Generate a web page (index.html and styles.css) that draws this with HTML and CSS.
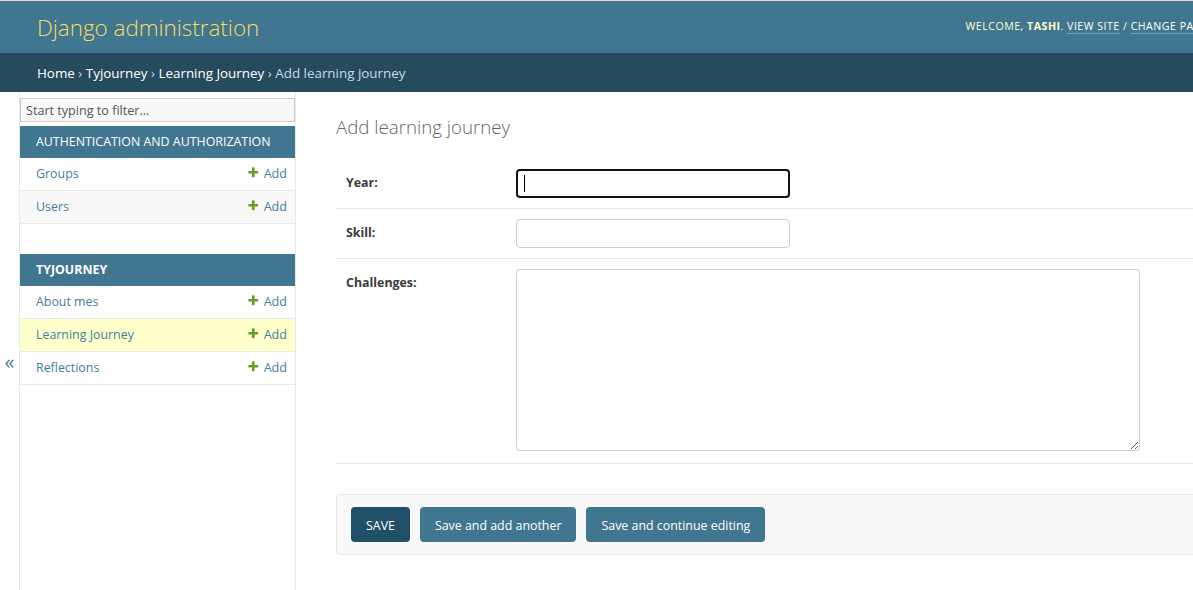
FILE: index.html
```html
<!DOCTYPE html>
<html lang="en">
<head>
<meta charset="utf-8">
<title>Add learning journey | Django site admin</title>
<link rel="stylesheet" href="styles.css">
</head>
<body>
<div class="page">
  <header class="header">
    <div class="branding"><h1 class="site-name"><a href="#">Django administration</a></h1></div>
    <div class="user-tools">Welcome, <strong>tashi</strong>. <a href="#">View site</a> / <a href="#">Change password</a> / <a href="#">Log out</a></div>
  </header>
  <nav class="breadcrumbs"><a href="#">Home</a> › <a href="#">Tyjourney</a> › <a href="#">Learning Journey</a> › Add learning journey</nav>
  <div class="main">
    <button class="toggle-nav" type="button">«</button>
    <aside class="sidebar">
      <input class="nav-filter" type="search" placeholder="Start typing to filter...">
      <table class="module">
        <caption>Authentication and Authorization</caption>
        <tr><th><a href="#">Groups</a></th><td><a class="addlink" href="#"><svg class="plus" viewBox="0 0 1792 1792"><path d="M1600 796v192q0 40-28 68t-68 28h-416v416q0 40-28 68t-68 28h-192q-40 0-68-28t-28-68v-416h-416q-40 0-68-28t-28-68v-192q0-40 28-68t68-28h416v-416q0-40 28-68t68-28h192q40 0 68 28t28 68v416h416q40 0 68 28t28 68z"/></svg>Add</a></td></tr>
        <tr class="hover"><th><a href="#">Users</a></th><td><a class="addlink" href="#"><svg class="plus" viewBox="0 0 1792 1792"><path d="M1600 796v192q0 40-28 68t-68 28h-416v416q0 40-28 68t-68 28h-192q-40 0-68-28t-28-68v-416h-416q-40 0-68-28t-28-68v-192q0-40 28-68t68-28h416v-416q0-40 28-68t68-28h192q40 0 68 28t28 68v416h416q40 0 68 28t28 68z"/></svg>Add</a></td></tr>
      </table>
      <table class="module current-app">
        <caption>Tyjourney</caption>
        <tr><th><a href="#">About mes</a></th><td><a class="addlink" href="#"><svg class="plus" viewBox="0 0 1792 1792"><path d="M1600 796v192q0 40-28 68t-68 28h-416v416q0 40-28 68t-68 28h-192q-40 0-68-28t-28-68v-416h-416q-40 0-68-28t-28-68v-192q0-40 28-68t68-28h416v-416q0-40 28-68t68-28h192q40 0 68 28t28 68v416h416q40 0 68 28t28 68z"/></svg>Add</a></td></tr>
        <tr class="current-model"><th><a href="#">Learning Journey</a></th><td><a class="addlink" href="#"><svg class="plus" viewBox="0 0 1792 1792"><path d="M1600 796v192q0 40-28 68t-68 28h-416v416q0 40-28 68t-68 28h-192q-40 0-68-28t-28-68v-416h-416q-40 0-68-28t-28-68v-192q0-40 28-68t68-28h416v-416q0-40 28-68t68-28h192q40 0 68 28t28 68v416h416q40 0 68 28t28 68z"/></svg>Add</a></td></tr>
        <tr><th><a href="#">Reflections</a></th><td><a class="addlink" href="#"><svg class="plus" viewBox="0 0 1792 1792"><path d="M1600 796v192q0 40-28 68t-68 28h-416v416q0 40-28 68t-68 28h-192q-40 0-68-28t-28-68v-416h-416q-40 0-68-28t-28-68v-192q0-40 28-68t68-28h416v-416q0-40 28-68t68-28h192q40 0 68 28t28 68v416h416q40 0 68 28t28 68z"/></svg>Add</a></td></tr>
      </table>
    </aside>
    <main class="content">
      <h1 class="title">Add learning journey</h1>
      <form>
        <fieldset class="fields">
          <div class="form-row">
            <label for="id_year">Year:</label>
            <span class="field-wrap"><input id="id_year" class="vTextField is-focused" type="text"><span class="caret"></span></span>
          </div>
          <div class="form-row">
            <label for="id_skill">Skill:</label>
            <input id="id_skill" class="vTextField" type="text">
          </div>
          <div class="form-row">
            <label for="id_challenges">Challenges:</label>
            <textarea id="id_challenges" class="vLargeTextField"></textarea>
          </div>
        </fieldset>
        <div class="submit-row">
          <button class="btn default" type="button">Save</button>
          <button class="btn" type="button">Save and add another</button>
          <button class="btn" type="button">Save and continue editing</button>
        </div>
      </form>
    </main>
  </div>
</div>
</body>
</html>
```

FILE: styles.css
```css
html, body {
  margin: 0;
  padding: 0;
}
body {
  font-family: "Open Sans", "Noto Sans", sans-serif;
  font-size: 13.4px;
  color: #333;
  background: #fff;
  border-top: 1px solid #ecd0ca;
  overflow: hidden;
}
.page {
  width: 1341px;
}
a {
  color: #447e9b;
  text-decoration: none;
}

/* header */
.header {
  display: flex;
  justify-content: space-between;
  align-items: center;
  box-sizing: border-box;
  height: 52px;
  padding: 0 40px 0 37px;
  background: #417690;
  color: #ffc;
}
.site-name {
  margin: 0;
  font-size: 22.4px;
  font-weight: 300;
  line-height: 30px;
  padding-top: 2px;
}
.site-name a {
  color: #f5dd5d;
}
.user-tools {
  font-size: 10.6px;
  letter-spacing: 0.5px;
  text-transform: uppercase;
  color: #ffc;
  margin-top: -2px;
  white-space: nowrap;
}
.user-tools strong {
  font-weight: 700;
}
.user-tools a {
  color: #fff;
  border-bottom: 1px solid rgba(255, 255, 255, 0.3);
}

/* breadcrumbs */
.breadcrumbs {
  background: #264b5d;
  color: #c4dce8;
  padding: 11px 37px 9px;
  font-size: 13.4px;
  line-height: 19px;
}
.breadcrumbs a {
  color: #fff;
}

/* main layout */
.main {
  display: flex;
  min-height: 498px;
}
.toggle-nav {
  flex: 0 0 20px;
  width: 20px;
  display: flex;
  justify-content: center;
  align-items: flex-start;
  padding: 256px 0 0;
  border: 0;
  border-right: 1px solid #e8e8e8;
  background: #fff;
  color: #447e9b;
  font-family: inherit;
  font-size: 20px;
}
.sidebar {
  flex: 0 0 276px;
  box-sizing: border-box;
  border-right: 1px solid #e8e8e8;
}
.nav-filter {
  display: block;
  box-sizing: border-box;
  width: 100%;
  height: 24px;
  margin: 6px 0 4px;
  padding: 2px 5px;
  border: 1px solid #ccc;
  border-radius: 0;
  background: #f8f8f8;
  color: #333;
  font-family: inherit;
  font-size: 12.6px;
  -webkit-appearance: none;
  appearance: none;
}
.nav-filter::placeholder {
  color: #555;
}
.module {
  width: 100%;
  border-collapse: collapse;
  margin-bottom: 30px;
}
.module caption {
  text-align: left;
  padding: 8px 8px 8px 16px;
  background: #417690;
  color: #fff;
  font-size: 12.4px;
  line-height: 16px;
  text-transform: uppercase;
}
.current-app caption {
  font-weight: 700;
}
.module th,
.module td {
  height: 16px;
  padding: 8px;
  font-size: 12.4px;
  line-height: 16px;
  font-weight: 400;
  border-bottom: 1px solid #e8e8e8;
  white-space: nowrap;
  vertical-align: middle;
}
.module th {
  text-align: left;
  padding-left: 16px;
}
.module td {
  text-align: right;
}
.module tr.hover {
  background: #f8f8f8;
}
.module tr.current-model {
  background: #ffc;
}
.addlink {
  display: inline-flex;
  align-items: center;
  gap: 4px;
  height: 16px;
  vertical-align: top;
  font-size: 12.6px;
}
.plus {
  width: 12.5px;
  height: 12.5px;
  fill: #5fa225;
  margin-top: -3px;
}

/* content */
.content {
  flex: 1;
  padding: 20px 40px;
}
.title {
  margin: 0 0 17px;
  font-size: 18.7px;
  font-weight: 300;
  line-height: 30px;
  color: #666;
}
.fields {
  margin: 0 0 30px;
  padding: 0;
  border: 0;
}
.form-row {
  display: flex;
  align-items: flex-start;
  padding: 10px;
  border-bottom: 1px solid #e8e8e8;
  font-size: 12.4px;
}
.form-row label {
  flex: 0 0 160px;
  padding: 8px 10px 0 0;
  line-height: 1;
  font-weight: 700;
  color: #3a3a3a;
}
.field-wrap {
  position: relative;
  display: block;
}
.vTextField,
.vLargeTextField {
  display: block;
  box-sizing: border-box;
  border: 1px solid #ccc;
  border-radius: 4px;
  padding: 5px 6px;
  background: #fff;
  color: #333;
  font-family: inherit;
  font-size: 12.4px;
}
.vTextField {
  width: 274px;
  height: 29px;
}
.vTextField.is-focused {
  border: 2px solid #111;
  outline: none;
}
.caret {
  position: absolute;
  left: 8px;
  top: 6px;
  width: 1px;
  height: 17px;
  background: #000;
}
.vLargeTextField {
  width: 624px;
  height: 182px;
  margin-bottom: 2px;
  resize: both;
}

/* submit row */
.submit-row {
  display: flex;
  gap: 10px;
  padding: 12px 14px;
  background: #f8f8f8;
  border: 1px solid #e8e8e8;
  border-radius: 4px;
}
.btn {
  height: 35px;
  padding: 1px 15px 0;
  border: 0;
  border-radius: 4px;
  background: #417690;
  color: #fff;
  font-family: inherit;
  font-size: 12.4px;
}
.btn.default {
  background: #205067;
  text-transform: uppercase;
}
```
